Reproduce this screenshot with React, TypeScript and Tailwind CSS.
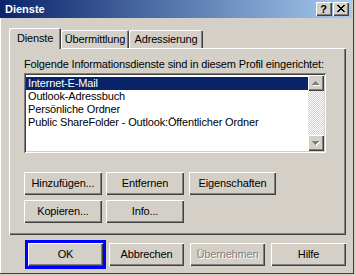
const bevel =
  "shadow-[inset_1px_1px_#fff,inset_-1px_-1px_#404040,inset_-2px_-2px_#808080]";

const rows = [
  "Internet-E-Mail",
  "Outlook-Adressbuch",
  "Persönliche Ordner",
  "Public ShareFolder - Outlook:Öffentlicher Ordner",
];

const Btn = ({
  label,
  w = "w-[75px]",
  disabled = false,
  className = "",
}: {
  label: string;
  w?: string;
  disabled?: boolean;
  className?: string;
}) => (
  <div
    className={`${w} h-[23px] flex items-center justify-center bg-[#d4d0c8] ${bevel} ${className} ${
      disabled ? "text-[#808080] [text-shadow:1px_1px_0_#fff]" : ""
    }`}
  >
    {label}
  </div>
);

const Arrow = ({ up }: { up: boolean }) => {
  const r = up
    ? [
        [3, 1],
        [2, 3],
        [1, 5],
        [0, 7],
      ]
    : [
        [0, 7],
        [1, 5],
        [2, 3],
        [3, 1],
      ];
  return (
    <svg width="8" height="5" viewBox="0 0 8 5" shapeRendering="crispEdges">
      {r.map(([x, w], i) => (
        <rect key={`w${i}`} x={x + 1} y={i + 1} width={w} height={1} fill="#fff" />
      ))}
      {r.map(([x, w], i) => (
        <rect key={`g${i}`} x={x} y={i} width={w} height={1} fill="#808080" />
      ))}
    </svg>
  );
};

const TitleBar = () => (
  <div className="w-[352px] h-[18px] flex items-center justify-between pl-[5px] pr-[3px] bg-[linear-gradient(to_right,#0a246a,#a6caf0)]">
    <span className="text-white font-bold leading-none tracking-normal">Dienste</span>
    <div className="flex gap-[1px]">
      <div className={`w-[16px] h-[14px] bg-[#d4d0c8] ${bevel} flex items-center justify-center font-bold text-[11px] leading-none pr-[1px]`}>
        ?
      </div>
      <div className={`w-[16px] h-[14px] bg-[#d4d0c8] ${bevel} flex items-center justify-center pb-[1px]`}>
        <svg width="8" height="7" viewBox="0 0 8 7" shapeRendering="crispEdges">
          <path
            d="M0 0h2v1h-2zM6 0h2v1h-2zM1 1h2v1h-2zM5 1h2v1h-2zM2 2h4v1h-4zM3 3h2v1h-2zM2 4h4v1h-4zM1 5h2v1h-2zM5 5h2v1h-2zM0 6h2v1h-2zM6 6h2v1h-2z"
            fill="#000"
          />
        </svg>
      </div>
    </div>
  </div>
);

const Tabs = () => (
  <div className="relative z-10 flex items-end h-[21px] -mb-[1px]">
    <div className="w-[52px] h-[21px] flex items-center justify-center bg-[#d4d0c8] rounded-t-[2px] shadow-[inset_1px_1px_#fff,inset_-1px_0_#404040,inset_-2px_0_#808080]">
      Dienste
    </div>
    <div className="w-[68px] h-[18px] mb-[1px] flex items-center justify-center rounded-t-[2px] shadow-[inset_1px_1px_#fff,inset_-1px_0_#404040,inset_-2px_0_#808080]">
      Übermittlung
    </div>
    <div className="w-[74px] h-[18px] mb-[1px] flex items-center justify-center rounded-t-[2px] shadow-[inset_1px_1px_#fff,inset_-1px_0_#404040,inset_-2px_0_#808080]">
      Adressierung
    </div>
  </div>
);

const ListBox = () => (
  <div className="w-[302px] h-[80px] mt-[2px] p-[2px] flex shadow-[inset_1px_1px_#808080,inset_-1px_-1px_#fff,inset_2px_2px_#404040,inset_-2px_-2px_#d4d0c8]">
    <div className="flex-1 bg-white pt-[2px]">
      {rows.map((r, i) => (
        <div
          key={r}
          className={`h-[13px] leading-[13px] pl-[2px] whitespace-nowrap ${
            i === 0 ? "bg-[#0a246a] text-white" : ""
          }`}
        >
          {r}
        </div>
      ))}
    </div>
    <div className="w-[16px] flex flex-col">
      <div className={`h-[16px] bg-[#d4d0c8] ${bevel} flex items-center justify-center`}>
        <Arrow up />
      </div>
      <div className="flex-1 bg-[image:repeating-conic-gradient(#fff_0%_25%,#d4d0c8_0%_50%)] bg-[length:2px_2px]" />
      <div className={`h-[16px] bg-[#d4d0c8] ${bevel} flex items-center justify-center`}>
        <Arrow up={false} />
      </div>
    </div>
  </div>
);

const Panel = () => (
  <div className={`w-[337px] h-[187px] pl-[15px] pt-[10px] ${bevel}`}>
    <div className="leading-[13px] whitespace-nowrap">
      Folgende Informationsdienste sind in diesem Profil eingerichtet:
    </div>
    <ListBox />
    <div className="mt-[19px] flex flex-col gap-[5px]">
      <div className="flex">
        <Btn label="Hinzufügen..." w="w-[78px]" />
        <Btn label="Entfernen" w="w-[78px]" className="ml-[4px]" />
        <Btn label="Eigenschaften" w="w-[87px]" className="ml-[5px]" />
      </div>
      <div className="flex">
        <Btn label="Kopieren..." w="w-[78px]" />
        <Btn label="Info..." w="w-[78px]" className="ml-[4px]" />
      </div>
    </div>
  </div>
);

export default function App() {
  return (
    <div className="w-[356px] h-[276px] bg-[#d4d0c8] font-['Liberation_Sans',Arial,sans-serif] text-[11px] tracking-[-0.15px] text-black overflow-hidden">
      <div className="w-[354px] h-[274px] border-r border-b border-[#404040] flex flex-col shadow-[inset_1px_0_#fff]">
        <TitleBar />
        <div className="pl-[9px] pt-[10px]">
          <Tabs />
          <Panel />
        </div>
        <div className="mt-[8px] pl-[28px] flex gap-[6px]">
          <Btn label="OK" className="outline-[3px] outline-solid outline-[#0000ff]" />
          <Btn label="Abbrechen" />
          <Btn label="Übernehmen" disabled />
          <Btn label="Hilfe" />
        </div>
      </div>
    </div>
  );
}
